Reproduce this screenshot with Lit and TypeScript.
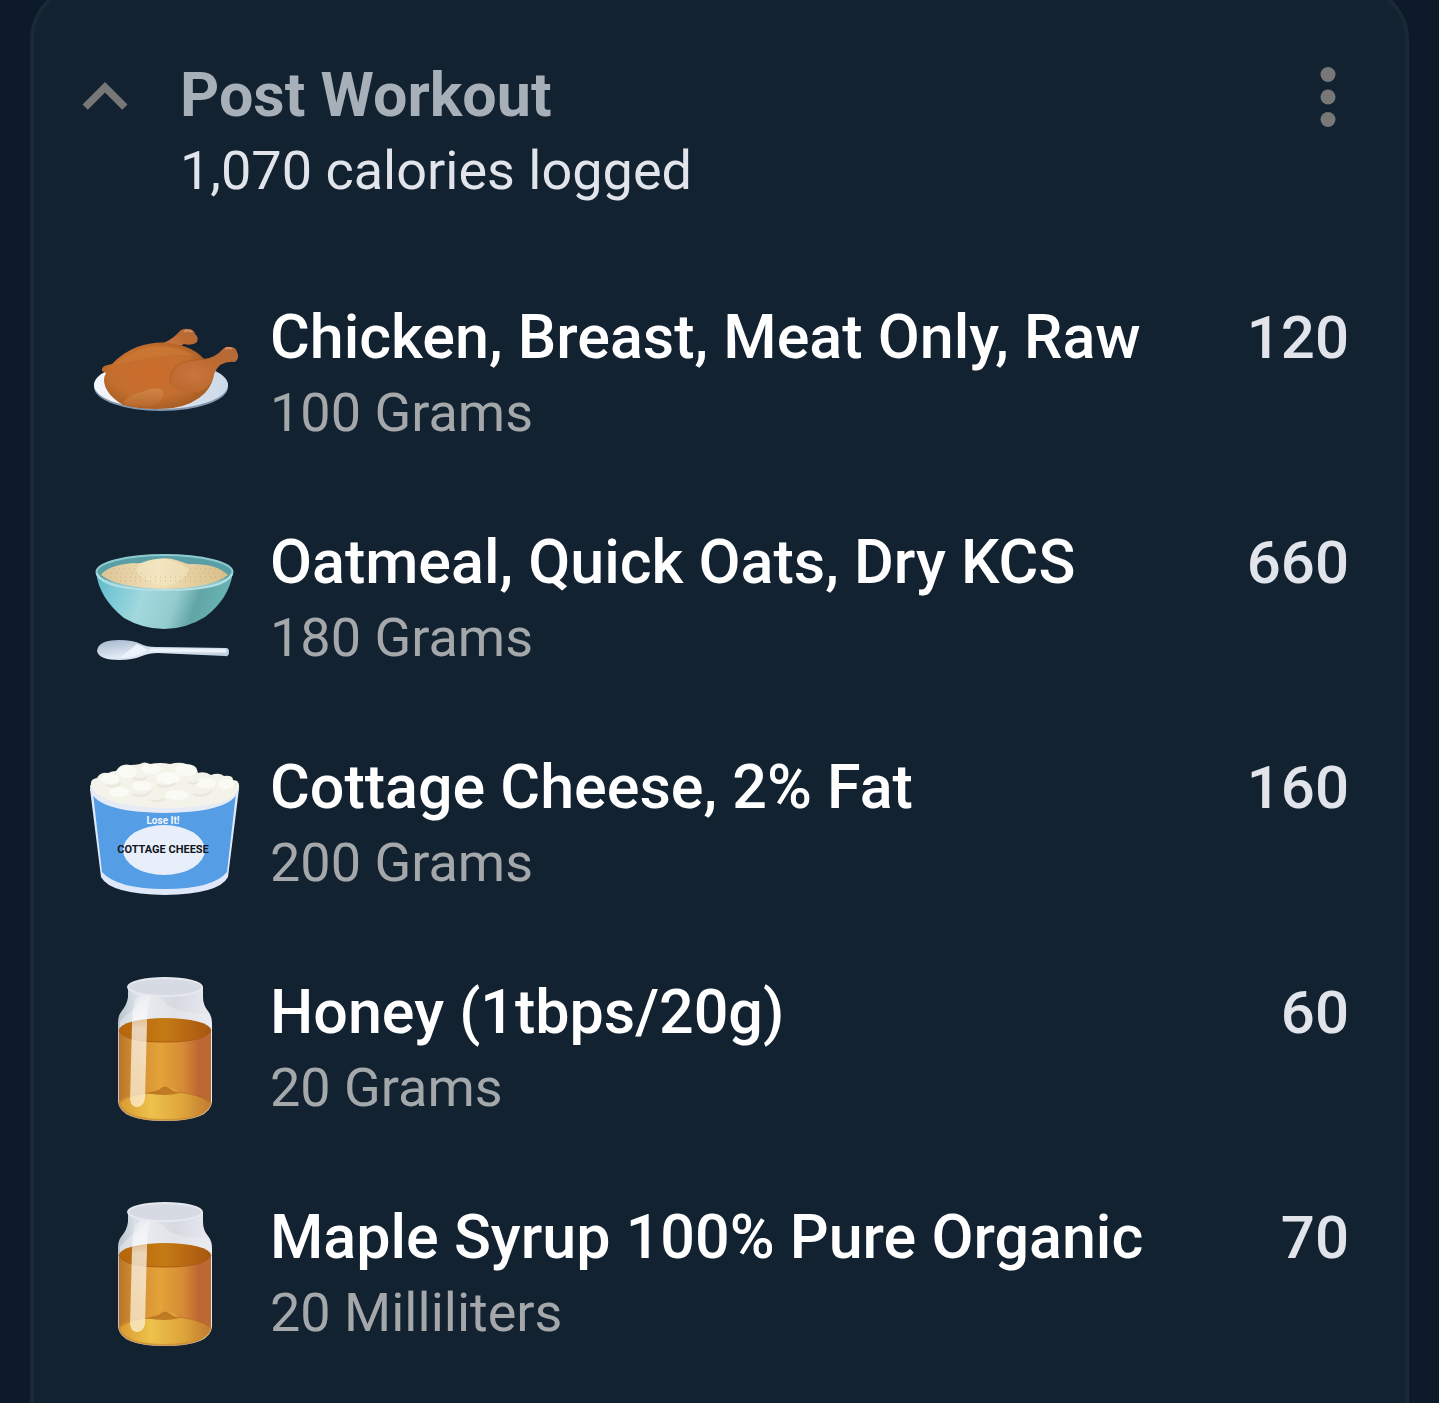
import { LitElement, html, css, svg } from 'lit';
import { customElement, property, state } from 'lit/decorators.js';

type IconName = 'chicken' | 'oatmeal' | 'cottage' | 'jar';

interface FoodEntry {
  icon: IconName;
  name: string;
  amount: string;
  calories: number;
}

const ENTRIES: FoodEntry[] = [
  { icon: 'chicken', name: 'Chicken, Breast, Meat Only, Raw', amount: '100 Grams', calories: 120 },
  { icon: 'oatmeal', name: 'Oatmeal, Quick Oats, Dry KCS', amount: '180 Grams', calories: 660 },
  { icon: 'cottage', name: 'Cottage Cheese, 2% Fat', amount: '200 Grams', calories: 160 },
  { icon: 'jar', name: 'Honey (1tbps/20g)', amount: '20 Grams', calories: 60 },
  { icon: 'jar', name: 'Maple Syrup 100% Pure Organic', amount: '20 Milliliters', calories: 70 },
];

const chicken = svg`
  <defs>
    <radialGradient id="body" cx="0.45" cy="0.45" r="0.6">
      <stop offset="0" stop-color="#cc6c2c" />
      <stop offset="0.6" stop-color="#c46f2f" />
      <stop offset="1" stop-color="#a45a22" />
    </radialGradient>
    <radialGradient id="thigh" cx="0.35" cy="0.6" r="0.75">
      <stop offset="0" stop-color="#c8763f" />
      <stop offset="0.5" stop-color="#bc6a2f" />
      <stop offset="1" stop-color="#b46a38" />
    </radialGradient>
    <linearGradient id="wing" x1="0" y1="0" x2="0" y2="1">
      <stop offset="0" stop-color="#d08648" />
      <stop offset="1" stop-color="#b86a2c" />
    </linearGradient>
    <linearGradient id="plate" x1="0" y1="0" x2="1" y2="0">
      <stop offset="0" stop-color="#f4f7fc" />
      <stop offset="1" stop-color="#ccd9e8" />
    </linearGradient>
  </defs>
  <ellipse cx="71" cy="86" rx="67" ry="24" fill="#8296ae" />
  <ellipse cx="71" cy="84" rx="67" ry="24" fill="url(#plate)" />
  <path d="M66 44Q80 41 88 32Q92 27 98 28Q104 28 105 33Q110 37 106 42Q100 45 94 43Q88 46 82 51Z" fill="url(#thigh)" />
  <path d="M12 70Q11 65 18 64L22 63Q32 52 47 46Q72 37 96 46Q107 50 114 58L124 70Q124 82 115 92Q103 104 83 107Q56 110 33 104Q15 93 14 80Q14 75 16 72Z" fill="url(#body)" />
  <path d="M24 64Q42 48 68 45Q90 45 104 55Q80 52 66 56Q40 60 24 64Z" fill="#d07e3a" opacity="0.45" />
  <path d="M80 80Q79 66 94 61L114 58Q125 57 133 48Q136 45 140 46Q146 46 147 51Q150 57 145 61Q137 60 130 64Q124 70 123 78Q118 89 107 91Q84 94 80 80Z" fill="url(#thigh)" />
  <path d="M80 84Q78 67 93 61Q108 58 117 58" fill="none" stroke="#9c4d1b" opacity="0.45" />
  <path d="M135 48Q139 46 142 48M94 31Q98 28 102 31" fill="none" stroke="#dfa073" stroke-width="2" opacity="0.7" />
  <path d="M33 102Q40 93 52 91Q62 86 71 88Q76 92 71 99Q64 106 51 105Q39 106 33 102Z" fill="url(#wing)" />
`;

const oatmeal = svg`
  <defs>
    <linearGradient id="bowl" x1="0" y1="0" x2="1" y2="0.15">
      <stop offset="0" stop-color="#5bb9c9" />
      <stop offset="0.18" stop-color="#7bc9d6" />
      <stop offset="0.4" stop-color="#a2d8dd" />
      <stop offset="0.64" stop-color="#93cccf" />
      <stop offset="0.8" stop-color="#62a5a6" />
      <stop offset="1" stop-color="#68b3b5" />
    </linearGradient>
    <linearGradient id="oats" x1="0" y1="0" x2="1" y2="0">
      <stop offset="0" stop-color="#dcc596" />
      <stop offset="0.45" stop-color="#f0e0b8" />
      <stop offset="0.6" stop-color="#ead6a9" />
      <stop offset="1" stop-color="#d8bd8a" />
    </linearGradient>
    <linearGradient id="spoon" x1="0" y1="0" x2="1" y2="1">
      <stop offset="0" stop-color="#a3b4ca" />
      <stop offset="0.5" stop-color="#e1eaf5" />
      <stop offset="1" stop-color="#b3c4d7" />
    </linearGradient>
  </defs>
  <path d="M6 46Q9 72 34 92Q53 103 74 103Q96 103 115 91Q139 73 143 46Z" fill="url(#bowl)" />
  <ellipse cx="74.5" cy="46" rx="68" ry="17" fill="#5b9fa6" stroke="#8ccbd1" stroke-width="2" />
  <path d="M11 49Q18 39 43 37Q52 38 57 35Q75 30 86 34L98 38Q126 37 138 49Q123 62 75 63Q27 62 11 49Z" fill="url(#oats)" />
  <path d="M49 38Q57 33 75 33Q90 36 99 43Q95 56 75 60Q53 56 46 45Z" fill="#f6eac9" opacity="0.45" />
  <path d="M16 47H52M98 47H134M20 51H132M30 55H120M24 43H48M100 43H128" stroke="#b89760" stroke-width="2" stroke-dasharray="1 4" opacity="0.25" />
  <path d="M7 48Q14 64 75 64Q135 64 142 48" fill="none" stroke="#b5dfe2" stroke-width="2" />
  <path d="M7 125Q8 114 29 114Q43 114 51 118Q56 121 66 121L136 122Q139 122 139 126Q139 131 135 130L68 127Q59 127 52 130Q43 134 29 134Q9 134 7 125Z" fill="url(#spoon)" />
  <path d="M60 124L136 125" stroke="#eef3fa" stroke-width="3" />
  <path d="M30 132L47 118Q52 120 57 124Q46 132 30 132Z" fill="#edf3fa" />
`;

const cottage = svg`
  <path d="M0 38L11 126Q20 143 75 144Q129 143 138 126L149 38Z" fill="#dfe8f8" />
  <path d="M3 42L12 121Q27 138 75 138Q123 138 137 121L146 42Z" fill="#559ee5" />
  <path d="M0 35Q0 61 75 62Q149 61 149 35L146 30H3Z" fill="#e6ebf5" />
  <path d="M1 34Q0 28 7 27Q10 21 18 22Q22 20 26 20Q31 12 40 14Q46 14 50 13Q54 10 60 13Q70 11 80 13Q92 10 98 14Q107 15 108 22Q115 20 121 24Q129 21 134 25Q143 24 143 29Q150 29 149 37Q144 48 129 52Q76 62 28 52Q3 45 1 34Z" fill="#f4f3ea" />
  <g fill="#fbfbf5">
    <ellipse cx="20" cy="28" rx="9" ry="5" />
    <ellipse cx="37" cy="21" rx="10" ry="6" />
    <ellipse cx="61" cy="18" rx="10" ry="5" />
    <ellipse cx="96" cy="19" rx="11" ry="6" />
    <ellipse cx="78" cy="27" rx="12" ry="6" />
    <ellipse cx="52" cy="35" rx="10" ry="5" />
    <ellipse cx="116" cy="32" rx="10" ry="5" />
    <ellipse cx="136" cy="33" rx="8" ry="5" />
    <ellipse cx="29" cy="41" rx="10" ry="5" />
    <ellipse cx="87" cy="44" rx="12" ry="5" />
  </g>
  <path d="M16 34Q23 38 31 32M43 27Q51 31 57 26M67 34Q76 38 86 32M98 31Q104 35 109 30M42 43Q53 48 61 40M103 43Q113 47 122 40M61 49Q68 52 75 48" fill="none" stroke="#dddacb" stroke-width="2" opacity="0.5" />
  <ellipse cx="74" cy="99" rx="41" ry="25" fill="#e8effa" />
  <text class="brand" x="73" y="73" text-anchor="middle">Lose It!</text>
  <text class="label" x="73" y="102" text-anchor="middle">COTTAGE CHEESE</text>
`;

const jar = svg`
  <defs>
    <linearGradient id="glass" x1="0" y1="0" x2="1" y2="0">
      <stop offset="0" stop-color="#b8c3cc" />
      <stop offset="0.25" stop-color="#e6e9ee" />
      <stop offset="0.6" stop-color="#d6d9e0" />
      <stop offset="1" stop-color="#e8eaf0" />
    </linearGradient>
    <linearGradient id="honey" x1="0" y1="0" x2="1" y2="0">
      <stop offset="0" stop-color="#b97428" />
      <stop offset="0.15" stop-color="#cf8b30" />
      <stop offset="0.45" stop-color="#e4a239" />
      <stop offset="0.7" stop-color="#d58a35" />
      <stop offset="0.87" stop-color="#bd6634" />
      <stop offset="1" stop-color="#b86c30" />
    </linearGradient>
    <linearGradient id="surface" x1="0" y1="0" x2="1" y2="0">
      <stop offset="0" stop-color="#b5650c" />
      <stop offset="0.5" stop-color="#c47a14" />
      <stop offset="1" stop-color="#a8560f" />
    </linearGradient>
    <linearGradient id="pool" x1="0" y1="0" x2="1" y2="0">
      <stop offset="0" stop-color="#d99a31" />
      <stop offset="0.35" stop-color="#edc24b" />
      <stop offset="0.7" stop-color="#dda43b" />
      <stop offset="1" stop-color="#c17a30" />
    </linearGradient>
    <linearGradient id="shine" x1="0" y1="0" x2="0" y2="1">
      <stop offset="0" stop-color="#ffffff" stop-opacity="0.2" />
      <stop offset="0.3" stop-color="#ffffff" stop-opacity="0.7" />
      <stop offset="1" stop-color="#fff3dc" stop-opacity="0.7" />
    </linearGradient>
  </defs>
  <path d="M38 11V21Q37 29 31 36Q28 40 28 47V126Q30 145 75 145Q120 145 122 126V47Q122 40 118 35Q113 29 113 21V11Z" fill="url(#glass)" />
  <path d="M58 19Q73 21 77 29Q91 37 117 38L122 47V54H30V45Q43 34 58 19Z" fill="#eceef2" opacity="0.5" />
  <ellipse cx="75" cy="11" rx="37" ry="9" fill="#d6dae2" stroke="#e6e9ef" stroke-width="2" />
  <path d="M29 54H121V126Q118 144 75 144Q32 144 29 126Z" fill="url(#honey)" />
  <ellipse cx="75" cy="54" rx="46" ry="12" fill="url(#surface)" />
  <path d="M29 54Q33 66 75 66Q117 66 121 54" fill="none" stroke="#a75b13" />
  <path d="M29 126Q38 117 63 117Q70 111 75 111Q82 111 88 116Q111 119 121 127Q117 144 75 144Q33 144 29 126Z" fill="url(#pool)" />
  <path d="M56 117Q68 115 71 112Q75 109 79 112Q84 116 90 117Q75 121 56 117Z" fill="#c07a24" />
  <path d="M29 127Q40 117 63 117M88 116Q112 119 121 127" fill="none" stroke="#b56c22" opacity="0.7" />
  <path d="M45 23Q52 19 61 19Q57 31 57 47L55 123Q53 131 47 131Q41 131 40 123L42 49Q42 36 45 23Z" fill="url(#shine)" />
  <path d="M29 126Q32 144 75 144Q118 144 121 126" fill="none" stroke="#c9892f" stroke-width="2" opacity="0.7" />
`;

const ICONS = { chicken, oatmeal, cottage, jar };

@customElement('food-icon')
export class FoodIcon extends LitElement {
  static styles = css`
    :host {
      display: block;
    }
    .picture {
      display: block;
      width: 150px;
      height: 150px;
    }
    .brand,
    .label {
      font-family: Roboto, sans-serif;
      font-weight: 700;
    }
    .brand {
      font-size: 10px;
      fill: #f2f6fd;
    }
    .label {
      font-size: 11px;
      fill: #10151c;
    }
  `;

  @property()
  name: IconName = 'jar';

  render() {
    return html`<svg class="picture" viewBox="0 0 150 150" aria-hidden="true">${ICONS[this.name]}</svg>`;
  }
}

@customElement('app-root')
export class AppRoot extends LitElement {
  static styles = css`
    :host {
      display: block;
      height: 100vh;
      overflow: hidden;
      background: #0d1a2a;
      font-family: Roboto, sans-serif;
    }
    .card {
      box-sizing: border-box;
      min-height: calc(100vh + 80px);
      margin: -16px 30px 0;
      padding-top: 64px;
      border: 4px solid #1a2936;
      border-radius: 56px;
      background: #132231;
    }
    .header {
      display: flex;
      align-items: flex-start;
      gap: 30px;
      padding: 0 32px 0 26px;
    }
    .icon-button {
      flex: none;
      width: 90px;
      height: 90px;
      padding: 0;
      border: 0;
      background: none;
      color: #777777;
      cursor: pointer;
    }
    .icon-button svg {
      display: block;
      width: 100%;
      height: 100%;
      fill: currentColor;
    }
    .collapsed svg {
      transform: rotate(180deg);
    }
    .heading {
      flex: 1;
      padding-top: 7px;
    }
    .title,
    .name,
    .calories {
      margin: 0;
      line-height: 73px;
    }
    .summary,
    .amount {
      margin: 0;
      font-size: 54px;
      line-height: 77px;
    }
    .title {
      font-size: 61px;
      font-weight: 700;
      color: #a7afb9;
    }
    .summary {
      color: #e1e5eb;
    }
    .entries {
      display: grid;
      gap: 75px;
      margin: 0;
      padding: 92px 56px 75px;
      list-style: none;
    }
    .entry {
      display: grid;
      grid-template-columns: 150px 1fr auto;
      gap: 30px;
    }
    .name {
      font-size: 61px;
      font-weight: 500;
      color: #ffffff;
    }
    .amount {
      color: #a5a8ab;
    }
    .calories {
      font-size: 60px;
      font-weight: 500;
      color: #e1e5eb;
    }
  `;

  @state()
  private expanded = true;

  private toggle() {
    this.expanded = !this.expanded;
  }

  private renderEntry(entry: FoodEntry) {
    return html`
      <li class="entry">
        <food-icon name=${entry.icon}></food-icon>
        <div>
          <p class="name">${entry.name}</p>
          <p class="amount">${entry.amount}</p>
        </div>
        <p class="calories">${entry.calories}</p>
      </li>
    `;
  }

  render() {
    const total = ENTRIES.reduce((sum, entry) => sum + entry.calories, 0);
    return html`
      <section class="card">
        <header class="header">
          <button
            class="icon-button ${this.expanded ? '' : 'collapsed'}"
            aria-label="Toggle meal"
            aria-expanded=${this.expanded}
            @click=${this.toggle}
          >
            <svg viewBox="0 0 24 24"><path d="M12 8l-6 6 1.41 1.41L12 10.83l4.59 4.58L18 14z" /></svg>
          </button>
          <div class="heading">
            <h2 class="title">Post Workout</h2>
            <p class="summary">${total.toLocaleString('en-US')} calories logged</p>
          </div>
          <button class="icon-button" aria-label="More options">
            <svg viewBox="0 0 24 24">
              <circle cx="12" cy="6" r="2" />
              <circle cx="12" cy="12" r="2" />
              <circle cx="12" cy="18" r="2" />
            </svg>
          </button>
        </header>
        ${this.expanded ? html`<ul class="entries">${ENTRIES.map((entry) => this.renderEntry(entry))}</ul>` : ''}
      </section>
    `;
  }
}
